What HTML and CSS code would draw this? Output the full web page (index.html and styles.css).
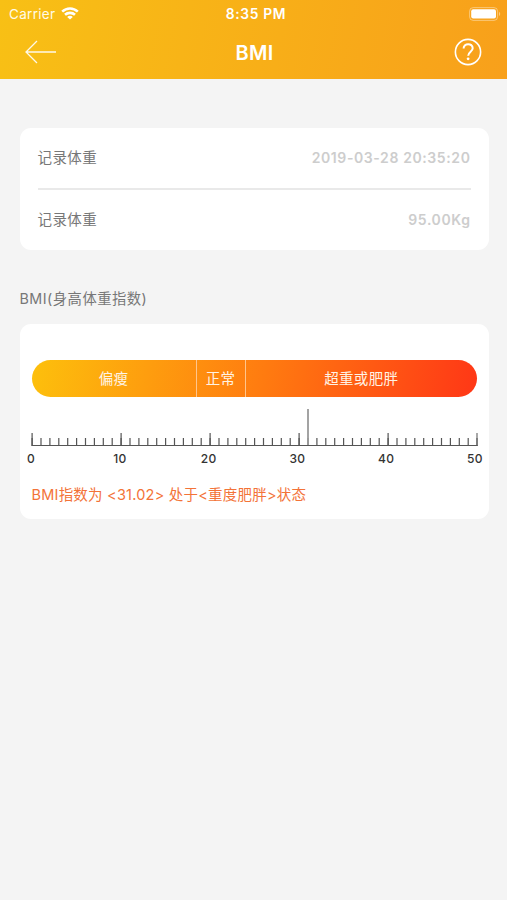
FILE: index.html
```html
<!DOCTYPE html>
<html lang="zh-CN">
<head>
  <meta charset="UTF-8">
  <title>BMI</title>
  <link rel="stylesheet" href="styles.css">
</head>
<body>
  <header class="header">
    <!-- Status bar -->
    <div class="status-bar">
      <div class="carrier">
        <span>Carrier</span>
        <svg width="18" height="13" viewBox="0 0 18 13" fill="none" stroke="#fff" stroke-width="2.6">
          <path d="M1.2 4.6C5.6 0.4 12.4 0.4 16.8 4.6"/>
          <path d="M4 7.8C6.8 5.2 11.2 5.2 14 7.8"/>
          <path d="M9 12.6L6.2 9.9C7.8 8.5 10.2 8.5 11.8 9.9Z" fill="#fff" stroke="none"/>
        </svg>
      </div>
      <span class="time">8:35 PM</span>
      <svg class="battery" width="32" height="14" viewBox="0 0 32 14">
        <rect x="0.6" y="0.6" width="28" height="12.8" rx="3.6" fill="none" stroke="#fff" stroke-opacity="0.4"/>
        <rect x="2.2" y="2.2" width="24.8" height="9.4" rx="2" fill="#fff"/>
        <path d="M30.1 4.8Q32.3 7 30.1 9.2Z" fill="#fff" fill-opacity="0.5"/>
      </svg>
    </div>

    <!-- Navigation -->
    <div class="nav">
      <svg width="32" height="24" viewBox="0 0 32 24" fill="none" stroke="#fff" stroke-opacity="0.9" stroke-width="1.3">
        <path d="M31 12H1M12 1L1 12L12 23"/>
      </svg>
      <h1 class="title">BMI</h1>
      <svg width="28" height="28" viewBox="0 0 28 28" fill="none" stroke="#fff" stroke-width="1.6">
        <circle cx="14" cy="14" r="12.6"/>
        <path d="M9.6 10.6C9.6 4.7 18.7 4.8 18.7 10.2C18.7 13.7 14.2 13.7 14.2 17.8" stroke-width="2"/>
        <circle cx="14.1" cy="20.8" r="1.4" fill="#fff" stroke="none"/>
      </svg>
    </div>
  </header>

  <main class="content">
    <!-- Record -->
    <section class="card record">
      <div class="row">
        <span class="label">记录体重</span>
        <span class="value">2019-03-28 20:35:20</span>
      </div>
      <div class="row">
        <span class="label">记录体重</span>
        <span class="value">95.00Kg</span>
      </div>
    </section>

    <h2 class="caption">BMI(身高体重指数)</h2>

    <!-- BMI scale -->
    <section class="card scale">
      <div class="bar">
        <span>偏瘦</span>
        <span>正常</span>
        <span>超重或肥胖</span>
      </div>
      <svg class="ruler" width="447" height="38" viewBox="0 0 447 38" stroke="#555">
        <path d="M0 36.5H445.6" stroke-width="1.2"/>
        <path d="M-0.5 33H445.5" stroke-width="8" stroke-dasharray="1.2 7.7"/>
        <path d="M-0.5 30.5H445.5" stroke-width="13" stroke-dasharray="1.2 87.8"/>
        <path d="M276 0V36" stroke="#999" stroke-width="1.8"/>
      </svg>
      <div class="numbers">
        <span>0</span>
        <span>10</span>
        <span>20</span>
        <span>30</span>
        <span>40</span>
        <span>50</span>
      </div>
      <p class="result">BMI指数为 &lt;31.02&gt; 处于&lt;重度肥胖&gt;状态</p>
    </section>
  </main>
</body>
</html>
```

FILE: styles.css
```css
* {
  box-sizing: border-box;
}

body {
  margin: 0;
  min-height: 100vh;
  background-color: #f4f4f4;
  color: #777;
  font-family: Inter, "Noto Sans CJK SC", sans-serif;
  font-size: 14.5px;
}

svg {
  display: block;
  overflow: visible;
}

/* Header */
.header {
  height: 79.4px;
  background: linear-gradient(100deg, #f8c015, #f8ae18 55%, #f8a01b);
  color: #fff;
}

.status-bar {
  display: grid;
  grid-template-columns: 1fr auto 1fr;
  align-items: center;
  height: 27px;
  padding: 0 6px 0 9px;
  font-size: 13.5px;
}

.carrier {
  display: flex;
  align-items: center;
  gap: 6px;
  letter-spacing: 0.3px;
  color: #fffbe8;
}

.time {
  padding-left: 2px;
  font-weight: 600;
  font-size: 13.8px;
  letter-spacing: 0.65px;
}

.battery {
  justify-self: end;
}

.nav {
  display: flex;
  justify-content: space-between;
  align-items: center;
  height: 50px;
  padding: 0 25px;
}

.title {
  margin: 1px 2px 0 0;
  font-size: 20px;
  font-weight: 600;
  letter-spacing: 0.2px;
}

/* Cards */
.content {
  padding: 48.6px 18px 0 19.5px;
}

.card {
  background-color: #fff;
  border-radius: 11px;
}

.record {
  height: 122px;
  padding: 0 18.5px 0 18px;
}

.row {
  display: flex;
  justify-content: space-between;
  align-items: center;
  height: 59px;
}

.row:first-child {
  height: 62px;
  border-bottom: 2px solid #e9e9e9;
}

.label {
  padding-bottom: 2px;
  letter-spacing: 0.4px;
}

.value {
  color: #cdcdcd;
  font-size: 14px;
  font-weight: 600;
  letter-spacing: 0.6px;
}

.caption {
  margin: 38.5px 0 13.5px;
  font-size: 14.3px;
  line-height: 22px;
  font-weight: 400;
  letter-spacing: 0.5px;
}

.scale {
  height: 195px;
  padding: 36px 12px 0;
}

.bar {
  display: grid;
  grid-template-columns: 164px 49px 1fr;
  height: 37px;
  border-radius: 19px;
  background: linear-gradient(100deg, #fdc00c, #ff7b10 52%, #ff3716);
  overflow: hidden;
  color: #fff3e4;
  letter-spacing: 0.3px;
}

.bar span {
  display: flex;
  justify-content: center;
  align-items: center;
  padding-bottom: 2px;
}

.bar span + span {
  border-left: 1px solid #ffc58c;
}

.ruler {
  margin-top: 12px;
}

.numbers {
  display: flex;
  justify-content: space-between;
  margin: 4px -9px 0 -11.5px;
  color: #333;
  font-size: 12px;
  line-height: 15px;
  font-weight: 500;
  letter-spacing: 0.3px;
}

.numbers span {
  width: 22px;
  text-align: center;
}

.result {
  margin: 18px 0 0;
  color: #f37338;
  font-size: 14.5px;
  line-height: 22px;
  letter-spacing: 0.22px;
}
```
